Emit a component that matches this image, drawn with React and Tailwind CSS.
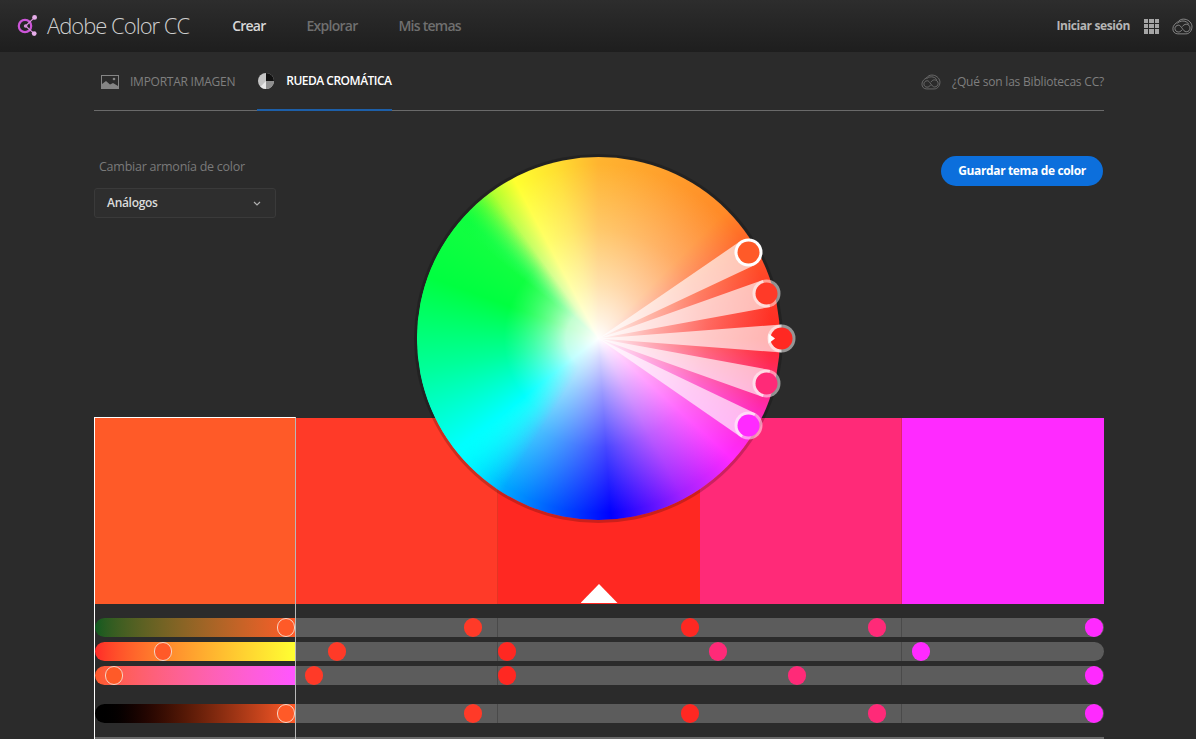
import React from 'react';

const font = 'font-["Open_Sans",sans-serif]';

const columns = [
  { color: '#ff5a28', knobs: [191, 68, 19, 191] },
  { color: '#ff3a28', knobs: [177, 41, 18, 177] },
  { color: '#ff2822', knobs: [192, 9, 9, 192] },
  { color: '#ff2a78', knobs: [177, 18, 97, 177] },
  { color: '#ff2aff', knobs: [192, 19, 192, 192] },
];

// handles on the wheel, coords are relative to the wheel's center
const handles = [
  { x: 150, y: -86, color: '#ff5a28', selected: true },
  { x: 168, y: -45, color: '#ff3a28' },
  { x: 183, y: 0, color: '#ff2822' },
  { x: 168, y: 45, color: '#ff2a78' },
  { x: 150, y: 87, color: '#ff2aff' },
];

const CloudIcon = ({ className }) => (
  <svg viewBox="0 0 22 18" className={className} fill="none" stroke="currentColor" strokeWidth="0.8">
    <path d="M6 16.8C2.8 16.8 0.8 14.4 0.8 11.4C0.8 7.6 3.8 5.6 5.8 4.4C7.6 2.2 9.6 1.2 12 1.2C16.6 1.2 20.2 4.2 21 8.2C21.4 12.6 18.8 16.8 14.6 16.8Z" />
    <path d="M3 11.2C3 9.2 4.6 7.6 6.8 7.6C10 7.6 11.4 14.6 15 14.6C17.4 14.6 19 12.8 19 10.6C19 8.4 17.2 6.6 15 6.6C13.2 6.6 12 7.6 11 9" />
    <path d="M3 11.2C3 13.2 4.6 14.8 6.6 14.8C8.2 14.8 9.4 14 10.4 12.6" />
    <path d="M5.6 5.8C7 4 9 3.2 11.4 3.2C14 3.2 16.4 4.4 17.6 6.6" />
  </svg>
);

const Logo = () => (
  <svg viewBox="0 0 24 24" className="h-6 w-6" fill="none">
    <circle cx="10" cy="12" r="6.2" stroke="#cc55d8" strokeWidth="2.2" />
    <path d="M19.6 3.4L10.6 12L19.2 19.6" stroke="#d98fdc" strokeWidth="1.2" />
    <circle cx="10.6" cy="12" r="1.8" fill="#d98fdc" />
    <circle cx="19.6" cy="3.4" r="2.4" fill="#e8aeea" />
    <circle cx="19.2" cy="19.6" r="2.4" fill="#e8aeea" />
  </svg>
);

const ImageIcon = () => (
  <svg viewBox="0 0 18 14" className="h-[14px] w-[18px]">
    <rect x="0.5" y="0.5" width="17" height="13" fill="none" stroke="#858585" />
    <path d="M1 13V9L5 6L9 9.5L12 8L17 11V13Z" fill="#858585" />
    <circle cx="13" cy="4" r="1.3" fill="#858585" />
  </svg>
);

const PieIcon = () => (
  <svg viewBox="0 0 16 16" className="h-4 w-4">
    <circle cx="8" cy="8" r="8" fill="#c4c4c4" />
    <path d="M8 8V0A8 8 0 0 1 16 8Z" fill="#111111" />
    <path d="M8 8H16A8 8 0 0 1 8 16Z" fill="#8f8f8f" />
    <path d="M8 8V16A8 8 0 0 1 2.4 13.7Z" fill="#e8e8e8" />
  </svg>
);

const GridIcon = () => (
  <div className="grid h-[15px] w-[15px] grid-cols-3 gap-px">
    {Array.from({ length: 9 }).map((_, i) => (
      <span key={i} className="bg-[#a5a5a5]" />
    ))}
  </div>
);

const Wheel = () => {
  const R = 14;
  return (
    <div className="absolute left-[323px] top-[105px] h-[363px] w-[363px] rounded-full bg-[image:radial-gradient(circle_closest-side,#ffffff_0%,rgba(255,255,255,0.85)_10%,rgba(255,255,255,0.6)_30%,rgba(255,255,255,0.28)_60%,rgba(255,255,255,0)_96%),conic-gradient(#ffb430_0deg,#ff8a28_45deg,#ff5a28_60deg,#ff3a28_75deg,#ff2822_90deg,#ff2a78_105deg,#ff2ad0_118deg,#ff2aff_132deg,#a020ff_152deg,#0000ff_176deg,#0088ff_205deg,#00ffff_232deg,#00ff9a_260deg,#00ff40_290deg,#10ff40_312deg,#9cff30_322deg,#ffff30_332deg,#ffdf30_346deg,#ffb430_360deg)] shadow-[0_0_0_3px_rgba(0,0,0,0.2)]">
      {/* greens and cyans stay saturated further in than the rest of the wheel */}
      <div className="absolute inset-0 rounded-full bg-[image:conic-gradient(rgba(0,255,255,0)_0deg,rgba(0,255,255,0)_212deg,#00ffff_232deg,#00ff9a_260deg,#00ff40_290deg,#10ff40_308deg,rgba(60,255,60,0)_324deg)] [mask-image:radial-gradient(circle_closest-side,transparent_18%,black_52%)]" />
      <svg viewBox="-181.5 -181.5 363 363" className="absolute inset-0 h-full w-full overflow-visible">
        {handles.map((h, i) => {
          const len = Math.hypot(h.x, h.y);
          const nx = (-h.y / len) * R;
          const ny = (h.x / len) * R;
          return (
            <path
              key={i}
              d={`M0 0L${h.x + nx} ${h.y + ny}L${h.x - nx} ${h.y - ny}Z`}
              fill="#ffffff"
              fillOpacity="0.65"
            />
          );
        })}
        {handles.map((h, i) => (
          <g key={i}>
            <circle cx={h.x} cy={h.y} r="14" fill="#ffffff" fillOpacity={h.selected ? 1 : 0.5} />
            <circle cx={h.x} cy={h.y} r="11" fill={h.color} />
          </g>
        ))}
        <path d="M170 -5L176.5 0L170 5Z" fill="#ffffff" />
      </svg>
    </div>
  );
};

const Slider = ({ color, left, colIndex, rowIndex }) => {
  const gradients = [
    'bg-gradient-to-r from-[#0d5a20] to-[#ff5a28]',
    'bg-gradient-to-r from-[#ff2828] to-[#ffff32]',
    'bg-gradient-to-r from-[#ff5a28] to-[#ff55ff]',
    'bg-gradient-to-r from-[#000000] to-[#ff5a28]',
  ];
  const first = colIndex === 0;
  return (
    <div
      className={`relative h-[19px] ${first ? `rounded-l-full ${gradients[rowIndex]}` : 'bg-[#5c5c5c]'} ${colIndex === 4 ? 'rounded-r-full' : ''} ${colIndex === 1 || colIndex === 3 ? 'border-r border-[#4a4a4a]' : ''}`}
    >
      <span
        className={`absolute top-0 h-[19px] w-[18px] -translate-x-1/2 rounded-full ${first ? 'border border-[#f5d5c5]' : ''}`}
        style={{ left, backgroundColor: color }}
      />
    </div>
  );
};

const Column = ({ column, index }) => {
  const selected = index === 0;
  return (
    <div
      className={`relative -mt-px flex h-[340px] w-[202px] flex-col border-t ${selected ? 'border-x border-t-white border-l-white border-r-[#b8b8b8]' : 'border-transparent'}`}
    >
      <div
        className={`flex h-[186px] shrink-0 items-end justify-center ${index === 1 || index === 3 ? 'border-r border-black/10' : ''}`}
        style={{ backgroundColor: column.color }}
      >
        {index === 2 && <div className="mb-px h-[19px] w-[37px] bg-white [clip-path:polygon(50%_0,100%_100%,0_100%)]" />}
      </div>
      <div className="mt-[14px] flex flex-col gap-[5px]">
        {column.knobs.slice(0, 3).map((left, row) => (
          <Slider key={row} color={column.color} left={left} colIndex={index} rowIndex={row} />
        ))}
      </div>
      <div className="mt-[19px]">
        <Slider color={column.color} left={column.knobs[3]} colIndex={index} rowIndex={3} />
      </div>
      <div className="mt-[14px] h-[19px] shrink-0 bg-[#6a6a6a]" />
    </div>
  );
};

export default function App() {
  return (
    <div className={`h-[739px] w-[1196px] overflow-hidden bg-[#2b2b2b] ${font}`}>
      <header className="flex h-[52px] items-center bg-gradient-to-b from-[#2d2d2d] to-[#1e1e1e] pl-[15px] pr-[3px]">
        <Logo />
        <span className="ml-2 pb-[2px] text-[22px] font-light tracking-[-1px] text-[#cfcfcf]">Adobe Color CC</span>
        <nav className="ml-[43px] flex gap-[41px] pb-[2px] text-[14px] font-semibold tracking-[-0.75px] text-[#6f6f6f]">
          <span className="text-[#d8d8d8]">Crear</span>
          <span>Explorar</span>
          <span>Mis temas</span>
        </nav>
        <div className="ml-auto flex items-center">
          <span className="text-[12px] font-bold tracking-[-0.4px] text-[#b5b5b5]">Iniciar sesión</span>
          <span className="ml-[14px]"><GridIcon /></span>
          <CloudIcon className="ml-[13px] h-[17px] w-[21px] text-[#a5a5a5]" />
        </div>
      </header>

      <main className="relative ml-[94px] w-[1010px]">
        <div className="flex h-[59px] items-stretch border-b border-[#6a6a6a]">
          <div className="flex items-center pl-[7px] pr-[22px] pt-px">
            <ImageIcon />
            <span className="ml-[11px] text-[12px] tracking-[-0.25px] text-[#7f7f7f]">IMPORTAR IMAGEN</span>
          </div>
          <div className="-mb-px flex items-center border-b-2 border-[#1d5fa8] pl-px">
            <PieIcon />
            <span className="ml-[12px] text-[12px] font-semibold tracking-[-0.5px] text-white">RUEDA CROMÁTICA</span>
          </div>
          <div className="ml-auto flex items-center pt-px">
            <CloudIcon className="h-[16px] w-[20px] text-[#808080]" />
            <span className="ml-[11px] text-[12px] tracking-[-0.2px] text-[#7f7f7f]">¿Qué son las Bibliotecas CC?</span>
          </div>
        </div>

        <div className="flex h-[307px] items-start justify-between">
          <div className="pt-[47px]">
            <div className="pl-[5px] text-[12.5px] leading-[18px] tracking-[-0.25px] text-[#7a7a7a]">Cambiar armonía de color</div>
            <div className="mt-[12px] flex h-[30px] w-[182px] items-center justify-between rounded-[3px] border border-[#3a3a3a] bg-[#2e2e2e] pl-3 pr-[14px]">
              <span className="text-[12px] font-semibold tracking-[-0.3px] text-[#dcdcdc]">Análogos</span>
              <svg viewBox="0 0 8 5" className="h-[5px] w-2" fill="none" stroke="#b0b0b0" strokeWidth="1.2">
                <path d="M1 1L4 4L7 1" />
              </svg>
            </div>
          </div>
          <button className="mr-px mt-[45px] flex h-[30px] w-[162px] items-center justify-center rounded-full bg-[#0c6fdc] text-[12px] font-bold tracking-[-0.35px] text-white">
            Guardar tema de color
          </button>
        </div>

        <div className="flex">
          {columns.map((column, i) => (
            <Column key={i} column={column} index={i} />
          ))}
        </div>

        <Wheel />
      </main>
    </div>
  );
}
